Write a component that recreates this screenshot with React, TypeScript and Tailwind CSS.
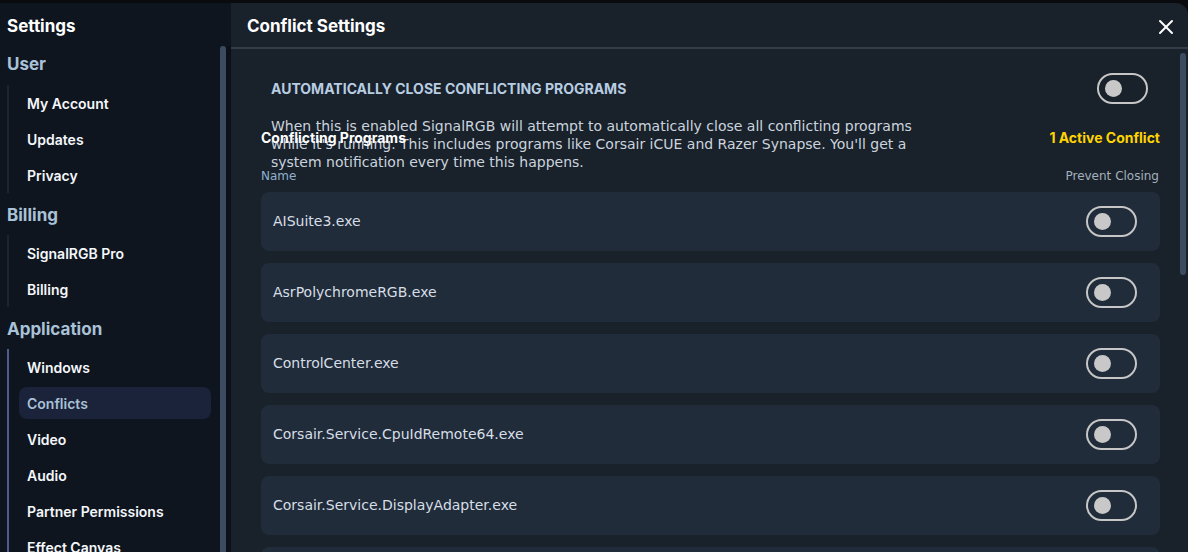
import { X } from "lucide-react"

const groups = [
  { title: "User", items: ["My Account", "Updates", "Privacy"], line: "border-[#1c2331]" },
  { title: "Billing", items: ["SignalRGB Pro", "Billing"], line: "border-[#1c2331]" },
  {
    title: "Application",
    items: ["Windows", "Conflicts", "Video", "Audio", "Partner Permissions", "Effect Canvas", "Layouts"],
    line: "border-[#4f5d8c]",
  },
]

const programs = [
  "AISuite3.exe",
  "AsrPolychromeRGB.exe",
  "ControlCenter.exe",
  "Corsair.Service.CpuIdRemote64.exe",
  "Corsair.Service.DisplayAdapter.exe",
  "Corsair.Service.exe",
]

function Toggle() {
  return (
    <div className="w-[51px] h-[31px] rounded-full border-2 border-[#c6c6c6] flex items-center pl-[6px] shrink-0">
      <div className="w-[17px] h-[17px] rounded-full bg-[#c8c8c8]"></div>
    </div>
  )
}

function Sidebar() {
  const head = "font-['Inter',sans-serif]"
  return (
    <aside className="w-[231px] shrink-0 flex bg-[#0f151e] overflow-hidden">
      <div className={`flex-1 pt-[11px] pl-[7px] pr-[9px] ${head}`}>
        <div className="text-[17px] leading-[24px] font-bold text-white">Settings</div>
        {groups.map((g, gi) => (
          <div key={g.title}>
            <div
              className={`text-[17px] leading-[24px] font-bold text-[#a9c2d8] ${
                gi === 0 ? "pt-[14px] pb-[9px]" : "pt-[10px] pb-[8px]"
              }`}
            >
              {g.title}
            </div>
            <div className={`border-l-2 ${g.line}`}>
              {g.items.map((it) => (
                <div key={it} className="py-[2px]">
                  <div
                    className={`ml-[10px] h-[32px] pl-[8px] flex items-center rounded-[8px] text-[14px] font-semibold ${
                      it === "Conflicts" ? "bg-[#1a233a] text-[#a9c0d6]" : "text-[#f4f7fb]"
                    }`}
                  >
                    {it}
                  </div>
                </div>
              ))}
            </div>
          </div>
        ))}
      </div>
      <div className="w-[11px] shrink-0 pt-[43px] flex">
        <div className="w-[6px] bg-[#3c4b5f] rounded-t-full"></div>
        <div className="w-[5px] bg-[#0c1119]"></div>
      </div>
    </aside>
  )
}

export default function App() {
  const body = "font-['DejaVu_Sans',sans-serif]"
  return (
    <div className="w-[1188px] h-[552px] bg-[#0a0b0e] pt-[3px] flex overflow-hidden">
      <Sidebar />
      <main className="flex-1 flex flex-col bg-[#19212b] rounded-tr-[12px] overflow-hidden">
        <header className="h-[46px] shrink-0 border-b-2 border-[#333c47] flex items-center justify-between pt-[3px] pl-[16px] pr-[10px] font-['Inter',sans-serif]">
          <h1 className="text-[17px] font-bold text-white">Conflict Settings</h1>
          <X size={24} strokeWidth={2} className="text-white" />
        </header>
        <div className="flex-1 flex overflow-hidden">
          <div className="flex-1 pl-[30px] pr-[18px] pt-[24px]">
            <div className="h-[55px] pl-[10px] pr-[12px]">
              <div className="flex items-center justify-between h-[31px]">
                <div className="font-['Inter',sans-serif] text-[14px] font-bold text-[#b8cde1]">
                  AUTOMATICALLY CLOSE CONFLICTING PROGRAMS
                </div>
                <Toggle />
              </div>
              <p className={`mt-[13px] w-[660px] text-[14px] leading-[18px] text-[#cbd4de] ${body}`}>
                When this is enabled SignalRGB will attempt to automatically close all conflicting programs while it's
                running. This includes programs like Corsair iCUE and Razer Synapse. You'll get a system notification
                every time this happens.
              </p>
            </div>
            <div className="relative flex items-center justify-between h-[18px] font-['Inter',sans-serif] text-[14px] font-bold">
              <span className="text-white">Conflicting Programs</span>
              <span className="text-[#ffd400]">1 Active Conflict</span>
            </div>
            <div className={`mt-[22px] flex items-center justify-between h-[16px] text-[12px] pr-[1px] ${body}`}>
              <span className="text-[#8fb1ce]">Name</span>
              <span className="text-[#a4b0bc]">Prevent Closing</span>
            </div>
            <div className="mt-[8px] flex flex-col gap-[12px]">
              {programs.map((p) => (
                <div
                  key={p}
                  className="h-[59px] shrink-0 rounded-[8px] bg-[#212c3a] flex items-center justify-between pl-[12px] pr-[23px]"
                >
                  <span className={`text-[14px] text-[#d6dee6] ${body}`}>{p}</span>
                  <Toggle />
                </div>
              ))}
            </div>
          </div>
          <div className="w-[10px] shrink-0 pt-[4px] pl-[2px] bg-[#19212b]">
            <div className="w-[6px] h-[222px] rounded-full bg-[#3c4b5f]"></div>
          </div>
        </div>
      </main>
    </div>
  )
}
